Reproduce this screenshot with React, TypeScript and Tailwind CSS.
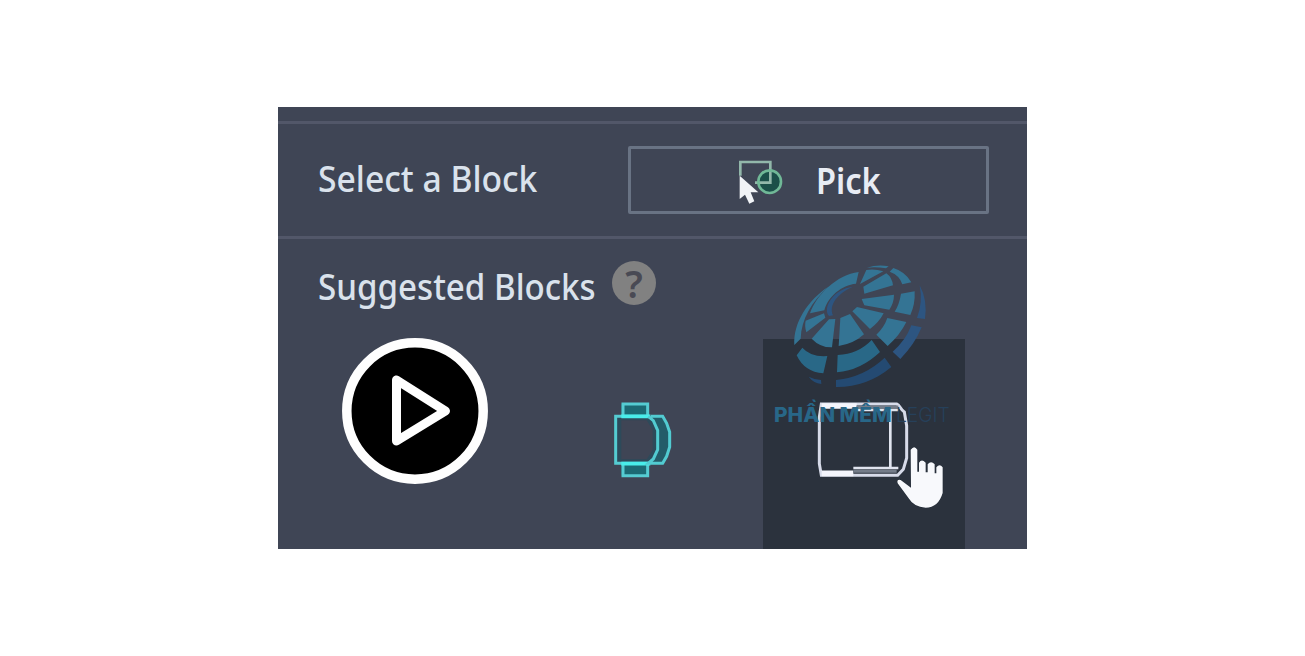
import React from "react";

function PickIcon() {
  return (
    <svg className="h-[50px] w-[50px]" viewBox="0 0 150 150" fill="none">
      <circle cx="91" cy="80" r="34" fill="#1b4f49" />
      <path d="M4 62V21H94V83H48" stroke="#92b7aa" strokeWidth="8" />
      <circle cx="92" cy="80" r="34" stroke="#70b897" strokeWidth="8" />
      <path d="M2 62V132L18 119L31 146L46 139L35 112H58Z" fill="#f1f3f7" />
    </svg>
  );
}

function PlayIcon() {
  return (
    <svg className="h-[148px] w-[148px]" viewBox="0 0 148 148" fill="none">
      <circle cx="74" cy="74" r="68.2" fill="#000" stroke="#fefefe" strokeWidth="9.5" />
      <path d="M55.500 43V104L104.500 74Z" stroke="#fefefe" strokeWidth="9" strokeLinejoin="round" />
    </svg>
  );
}

function ChairIcon() {
  return (
    <svg className="h-[110px] w-[110px]" viewBox="0 0 330 330" fill="none">
      <path d="M78 107H178L203 145V215L178 250H78Z" fill="#2d4a5a" />
      <path d="M94 121H170L188 150V210L170 238H94Z" fill="#3f4555" />
      <path d="M94 72H175V107H94ZM94 251H175V287H94Z" fill="#1c6a74" />
      <path d="M180 109L207 150V209L180 250H220L239 203V153L220 109Z" fill="#235c69" />
      <path d="M99 105V72H173V105M99 253V287H173V253M175 109H77V250H175" stroke="#55ccd2" strokeWidth="9" />
      <path d="M94 109H181M94 251H181" stroke="#49edea" strokeWidth="11" />
      <path d="M175 109L190 122L203 151V209L190 237L175 250H218L230 229L239 201V156L230 130L218 109H182" stroke="#52cbd1" strokeWidth="9" />
    </svg>
  );
}

function SofaIcon() {
  return (
    <svg className="h-[170px] w-[210px]" viewBox="0 0 630 510" fill="none">
      <path d="M184 72H410C421 76 420 88 433 96L440 137V234L430 268L413 286H184L178 251V111Z" stroke="#d7dbe9" strokeWidth="9" />
      <path d="M185 78H290M185 280H280" stroke="#f4f5fc" strokeWidth="17" />
      <path d="M290 81H415M280 274H410" stroke="#747c89" strokeWidth="9" />
      <path d="M286 90H416M280 264H415M391 92V265" stroke="#e0e4ef" strokeWidth="8" />
    </svg>
  );
}

function Globe() {
  return (
    <svg className="absolute left-0 top-0 h-[190px] w-[210px]" viewBox="0 0 630 570">
      <g fill="#347494">
        <path d="M150 190C170 133 230 75 296 66L288 101C245 105 204 139 193 181Z" />
        <path d="M103 285C99 218 144 150 205 110C155 155 124 207 122 266Z" />
        <path d="M321 53Q352 43 386 49L378 55Q348 50 321 53ZM319 60Q344 56 370 64L300 102ZM400 54Q436 65 454 97L427 103Q418 75 389 65ZM379 70Q396 82 399 106L313 131L310 110ZM305 147L402 134Q402 158 388 179L313 166ZM423 131L464 124Q466 163 451 195L404 185Q418 163 423 131ZM291 171L371 190Q357 217 330 237L277 184ZM382 204L439 216Q420 255 383 288L349 254Q372 233 382 204ZM270 192L312 253Q280 282 236 288L241 204ZM226 207L216 292Q181 293 155 266L207 208ZM192 190L196 203L139 247Q133 228 137 212Z" />
      </g>
      <path fill="#296887" d="M127 293Q153 322 202 318L190 370Q133 366 110 316ZM233 315Q295 312 335 270L360 306Q302 361 231 367Z" />
      <g fill="#2d5581">
        <path d="M279 110C235 128 205 164 219 196L207 198C187 175 218 117 279 110ZM479 106Q503 150 495 207L471 204Q489 157 479 106ZM454 226L485 232Q464 283 421 327L398 305Q437 272 454 226Z" />
        <path fill="#244a72" d="M374 323L394 351Q321 412 228 411V390Q313 381 374 323ZM146 380Q164 389 183 390L184 402Q160 399 146 380Z" />
      </g>
    </svg>
  );
}

function Hand() {
  return (
    <svg className="h-[66px] w-[52px]" viewBox="0 0 156 198">
      <path d="M47 14Q58-1 67 14V80H72V53Q80 40 92 53V82H98V58Q108 45 119 58V85H124V67Q134 55 143 67V144Q130 188 92 188Q56 186 41 160L8 115Q4 101 17 105L48 128Z" fill="#f8f9fc" stroke="#222b36" strokeWidth="3" paintOrder="stroke" />
    </svg>
  );
}

export default function App() {
  return (
    <main className="flex h-[656px] w-full justify-center bg-white pt-[107px] font-['Noto_Sans',sans-serif]">
      <section className="h-[442px] w-[749px] overflow-hidden bg-[#3f4555] text-[#dae2ec]">
        <div className="h-[17px] border-b-[3px] border-[#525769]" />
        <div className="flex h-[115px] items-center border-b-[3px] border-[#525769] pl-10">
          <div className="w-[310px] pb-0.5">
            <span className="inline-block origin-left scale-x-[0.935] whitespace-nowrap text-[36px] leading-none font-medium">Select a Block</span>
          </div>
          <button className="flex h-[68px] w-[361px] items-center rounded-[2px] border-[3px] border-[#697384] pl-[108px]">
            <PickIcon />
            <span className="ml-[27px] inline-block origin-left scale-x-[0.905] pt-0.5 text-[36px] leading-none font-semibold text-[#e8ecf4]">Pick</span>
          </button>
        </div>
        <div className="flex h-[100px] pl-10 pt-[22px]">
          <div className="w-[294px] pt-[8px]">
            <span className="inline-block origin-left scale-x-[0.92] whitespace-nowrap text-[36px] leading-none font-medium">Suggested Blocks</span>
          </div>
          <span className="flex size-[44px] items-center justify-center rounded-full bg-[#818181] text-[38px] leading-none font-semibold text-[#494a54]">?</span>
        </div>
        <div className="flex h-[210px]">
          <div className="w-[312px] pl-[63px]"><div className="-mt-[2px]"><PlayIcon /></div></div>
          <div className="w-[173px] pt-[41px]"><ChairIcon /></div>
          <div className="relative h-[210px] w-[202px] bg-[#2b323d]">
            <div className="absolute -left-[3px] -top-[89px] h-[299px] w-[210px]">
              <div className="absolute left-0 top-[130px]"><SofaIcon /></div>
              <Globe />
              <div className="absolute left-[14px] top-[151px] flex gap-[6px] font-['Inter',sans-serif] text-[20px] leading-[28px] whitespace-nowrap">
                <span className="w-[110px]"><span className="inline-block origin-left scale-x-[1.04] font-extrabold text-[#286788]">PHẦN MỀM</span></span>
                <span className="ml-[6px] inline-block origin-left scale-x-[0.96] font-light text-[#26405a]">LEGIT</span>
              </div>
              <div className="absolute left-[135px] top-[195px]"><Hand /></div>
            </div>
          </div>
        </div>
      </section>
    </main>
  );
}
